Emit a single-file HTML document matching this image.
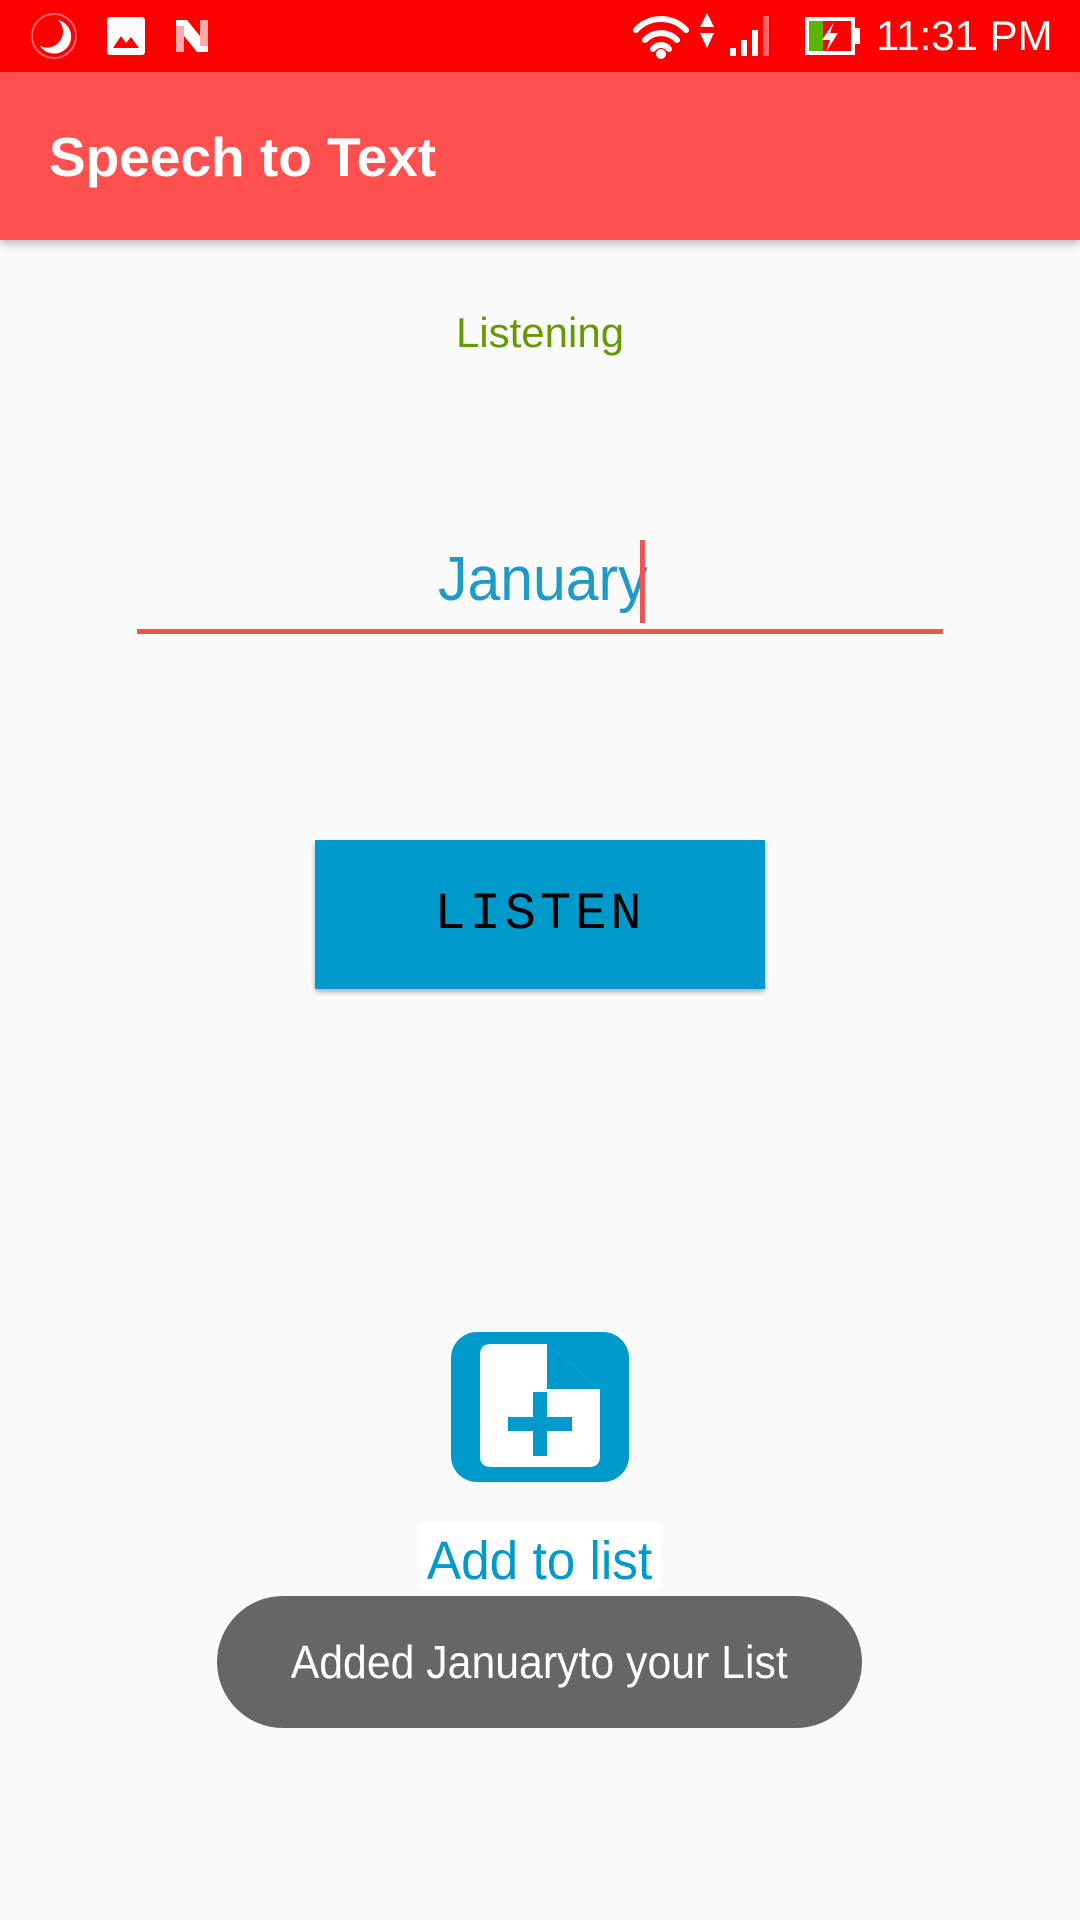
<!DOCTYPE html>
<html><head><meta charset="utf-8"><style>
*{margin:0;padding:0;box-sizing:border-box}
body{width:1080px;height:1920px;background:#fafafa;position:relative;overflow:hidden;font-family:"Liberation Sans",sans-serif}
.sb{position:absolute;left:0;top:0;width:1080px;height:72px;background:#ff0000}
.ab{position:absolute;left:0;top:72px;width:1080px;height:168px;background:#ff5050;box-shadow:0 4px 8px rgba(0,0,0,.25)}
.title{position:absolute;left:49px;top:125px;color:#fff;font-size:55px;line-height:64px;font-weight:bold;transform:scaleX(1.0);transform-origin:left}
.abs{position:absolute}
</style></head><body>
<div class="sb"></div>
<svg class="abs" style="left:0;top:0" width="1080" height="72">
 <circle cx="54" cy="36" r="22" fill="none" stroke="#ff6060" stroke-width="2"/>
 <path d="M58 20 A17 17 0 1 1 40 46 A16 16 0 0 0 58 20Z" fill="#fff"/>
 <rect x="107" y="17" width="38" height="38" rx="3" fill="#fff"/>
 <path d="M113 48 L121 36 L126 43 L131 37 L139 48Z" fill="#ff0000"/>
 <path d="M176 20 L187 20 L208 46 L208 52 L197 52 L176 26Z" fill="#fff"/>
 <rect x="176" y="26" width="8" height="26" fill="#ffaaaa"/>
 <rect x="200" y="20" width="8" height="26" fill="#ffaaaa"/>
 <g fill="none" stroke="#fff" stroke-width="6" stroke-linecap="round">
  <path d="M636 30 A34 34 0 0 1 686 30"/><path d="M645 40 A22 22 0 0 1 677 40"/><path d="M653 49 A10 10 0 0 1 669 49"/>
 </g>
 <circle cx="661" cy="54" r="5" fill="#fff"/>
 <path d="M707 13 L714 27 L700 27Z M700 33 L714 33 L707 48Z" fill="#fff"/>
 <rect x="730" y="48" width="6" height="8" fill="#fff"/><rect x="741" y="40" width="6" height="16" fill="#fff"/><rect x="752" y="30" width="6" height="26" fill="#fff"/><rect x="763" y="16" width="6" height="40" fill="#ff6666"/>
 <rect x="805" y="17" width="50" height="38" fill="#fff"/>
 <rect x="809" y="21" width="42" height="30" fill="#ff0000"/>
 <rect x="809" y="21" width="14" height="30" fill="#5ab400"/>
 <rect x="855" y="28" width="5" height="16" fill="#fff"/>
 <path d="M834 22 L822 40 L830 40 L826 52 L838 33 L830 33Z" fill="#fff"/>
 <text x="876" y="50" fill="#fff" font-size="42" font-family="Liberation Sans">11:31 PM</text>
</svg>
<div class="ab"></div>
<div class="title">Speech to Text</div>
<div class="abs" style="left:0;width:1080px;top:309px;text-align:center;color:#669900;font-size:42px;line-height:48px">Listening</div>
<div class="abs" style="left:438px;top:540px;color:#1e9ac8;font-size:62px;line-height:80px;transform:scaleX(0.95);transform-origin:left">January</div>
<div class="abs" style="left:640px;top:540px;width:5px;height:83px;background:#f05555"></div>
<div class="abs" style="left:137px;top:629px;width:806px;height:5px;background:#f05555"></div>
<div class="abs" style="left:315px;top:840px;width:450px;height:149px;background:#0099cc;box-shadow:0 3px 5px rgba(0,0,0,.3);text-align:center;font-family:'Liberation Mono',monospace;font-size:52px;line-height:149px;letter-spacing:4px;color:#000">LISTEN</div>
<svg class="abs" style="left:451px;top:1332px" width="178" height="150" viewBox="0 0 178 150">
 <rect x="0" y="0" width="178" height="150" rx="26" fill="#0099cc"/>
 <path d="M40 12 L96 12 L149 57 L149 124 Q149 135 138 135 L40 135 Q29 135 29 124 L29 23 Q29 12 40 12Z" fill="#fff"/>
 <path d="M96 12 L96 57 L149 57Z" fill="#0099cc"/>
 <rect x="57" y="85" width="64" height="14" fill="#0099cc"/>
 <rect x="82" y="60" width="14" height="64" fill="#0099cc"/>
</svg>
<div class="abs" style="left:419px;top:1523px;width:242px;height:66px;background:#fff;color:#0099cc;font-size:54px;line-height:76px;text-align:center;white-space:nowrap"><span style="display:inline-block;transform:scaleX(0.95)">Add to list</span></div>
<div class="abs" style="left:217px;top:1596px;width:645px;height:132px;border-radius:66px;background:#666;color:#fff;font-size:46px;line-height:132px;text-align:center;white-space:nowrap"><span style="display:inline-block;transform:scaleX(0.93)">Added Januaryto your List</span></div>
</body></html>
